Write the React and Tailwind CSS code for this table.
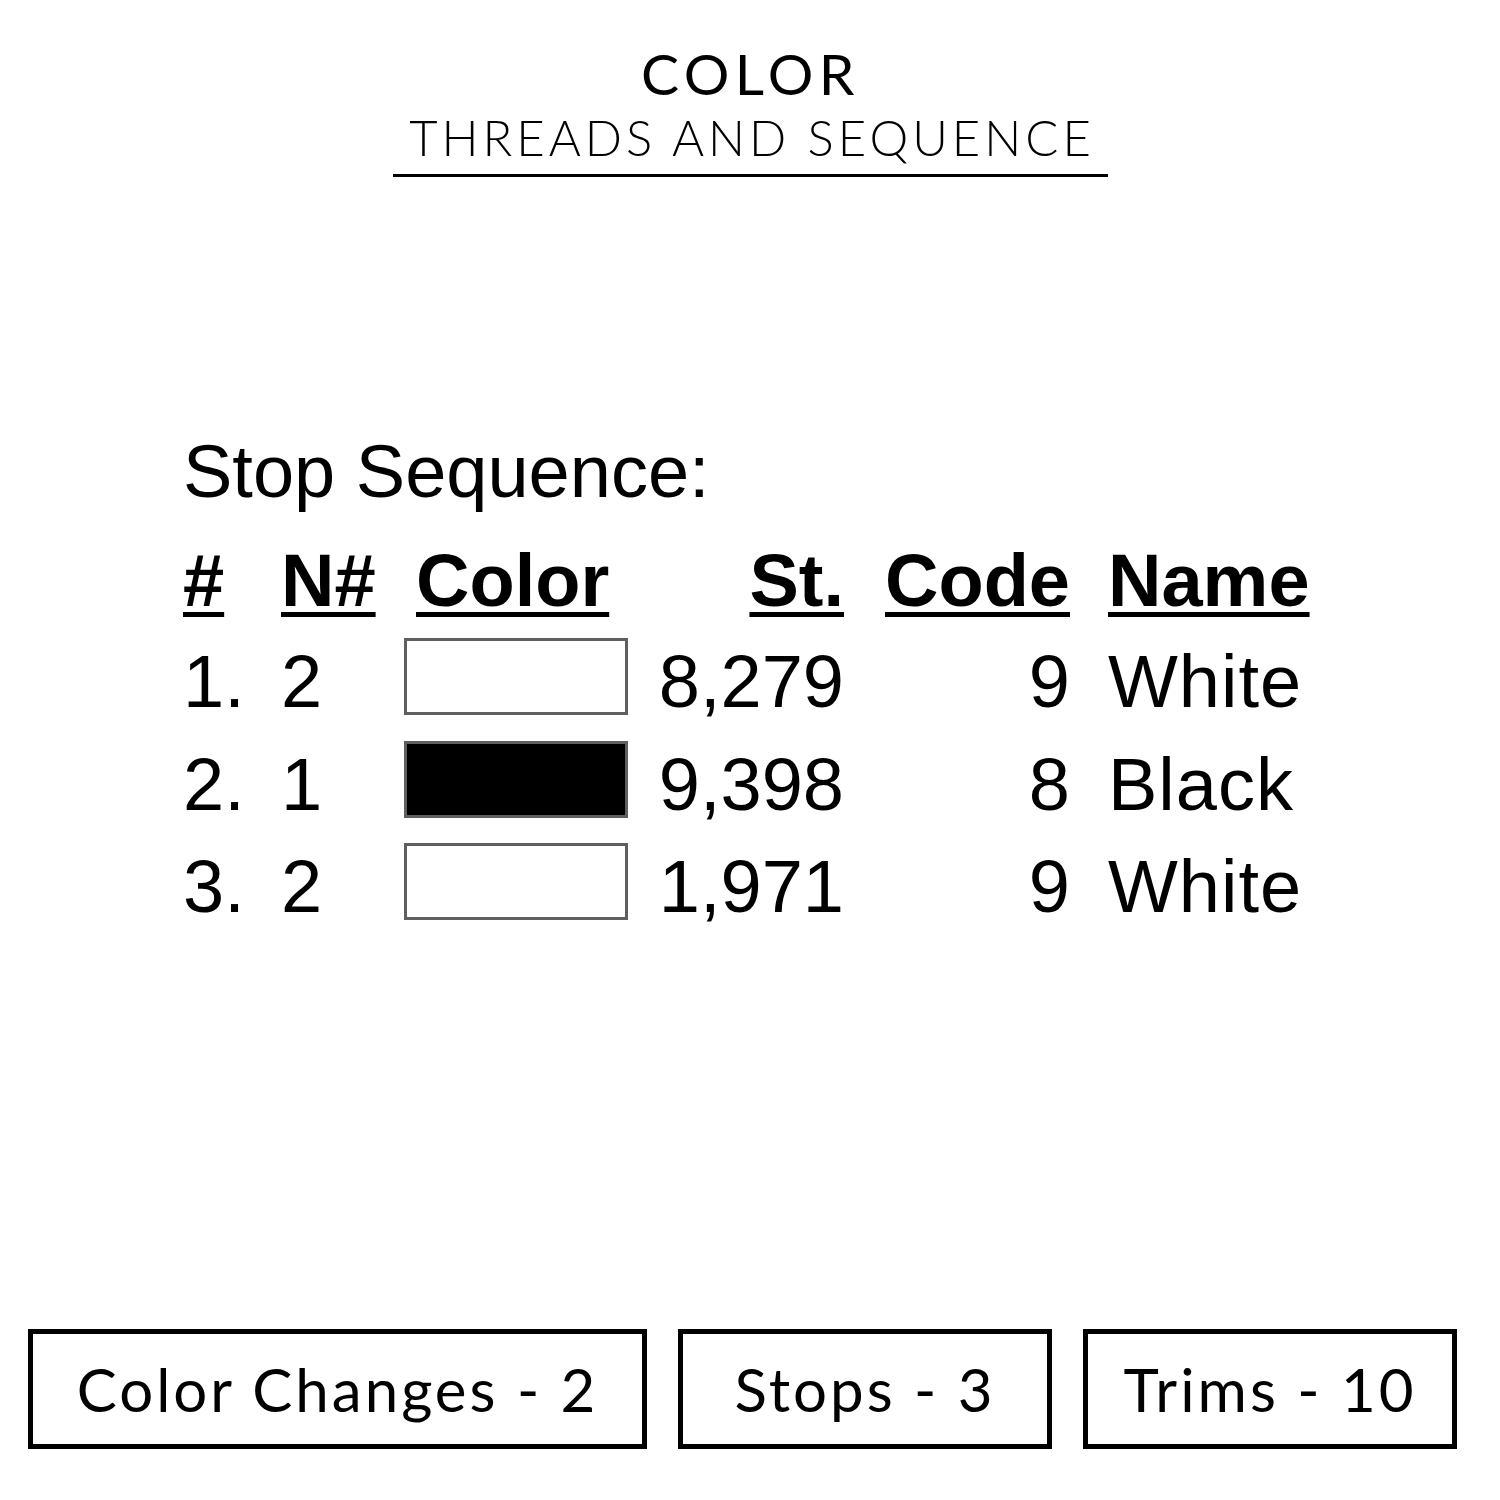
const rows = [
  { n: '1.', needle: '2', fill: 'bg-white', st: '8,279', code: '9', name: 'White' },
  { n: '2.', needle: '1', fill: 'bg-black', st: '9,398', code: '8', name: 'Black' },
  { n: '3.', needle: '2', fill: 'bg-white', st: '1,971', code: '9', name: 'White' },
];

const stats = [
  { label: 'Color Changes - 2', width: 'w-[619px]' },
  { label: 'Stops - 3', width: 'w-[374px]' },
  { label: 'Trims - 10', width: 'w-[374px]' },
];

export default function App() {
  const head = 'underline decoration-[length:5px] underline-offset-[6px]';

  return (
    <div className="w-[1500px] h-[1500px] bg-white text-black flex flex-col">
      {/* title */}
      <div className="flex flex-col items-center pt-[45px] font-['Lato',sans-serif]">
        <div className="text-[57px] leading-none font-normal tracking-[5.5px] pl-[1px]">COLOR</div>
        <div className="w-[715px] mt-[11px] pb-[12px] border-b-[3px] border-black text-center">
          <span className="text-[49px] leading-none font-light tracking-[4px] pl-[4px]">THREADS AND SEQUENCE</span>
        </div>
      </div>

      {/* stop sequence table */}
      <div className="font-['Liberation_Sans',Arial,sans-serif] text-[74px] leading-none pl-[181px]">
        <div className="mt-[258px] pl-[2px]">Stop Sequence:</div>

        <div className="flex mt-[35px] font-bold h-[74px]">
          <div className="w-[100px] pl-[2px]"><span className={head}>#</span></div>
          <div className="w-[123px]"><span className={head}>N#</span></div>
          <div className="w-[240px] pl-[12px]"><span className={head}>Color</span></div>
          <div className="w-[200px] text-right"><span className={head}>St.</span></div>
          <div className="w-[226px] text-right"><span className={head}>Code</span></div>
          <div className="pl-[38px]"><span className={head}>Name</span></div>
        </div>

        <div className="flex flex-col gap-[28.5px] mt-[27px]">
          {rows.map((r) => (
            <div key={r.n} className="flex items-start h-[74px]">
              <div className="w-[100px] pl-[2px]">{r.n}</div>
              <div className="w-[123px]">{r.needle}</div>
              <div className="w-[240px]">
                <div className={`w-[224px] h-[77px] -mt-[7px] border-[3px] border-[#5f5f5f] ${r.fill}`}></div>
              </div>
              <div className="w-[200px] text-right">{r.st}</div>
              <div className="w-[226px] text-right">{r.code}</div>
              <div className="pl-[38px] tracking-[1px]">{r.name}</div>
            </div>
          ))}
        </div>
      </div>

      {/* totals */}
      <div className="flex gap-[31px] pl-[28px] mt-[405px] font-['Lato',sans-serif]">
        {stats.map((s) => (
          <div
            key={s.label}
            className={`${s.width} h-[120px] border-[5px] border-black flex items-center justify-center text-[60px] leading-none tracking-[3px]`}
          >
            {s.label}
          </div>
        ))}
      </div>
    </div>
  );
}
